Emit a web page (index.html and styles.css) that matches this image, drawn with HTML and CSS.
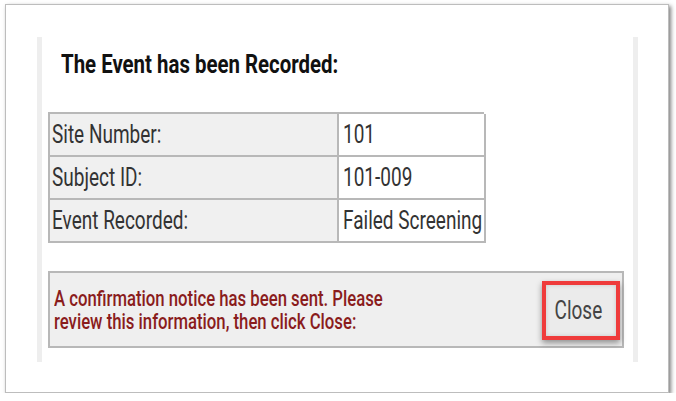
FILE: index.html
```html
<!DOCTYPE html>
<html lang="en">
<head>
<meta charset="utf-8">
<title>Event Recorded</title>
<link rel="stylesheet" href="styles.css">
</head>
<body>
<div class="frame">
  <div class="panel">
    <h1 class="title"><span class="sq wide">The Event has been Recorded:</span></h1>
    <div class="grid">
      <div class="cell label"><span class="sq">Site Number:</span></div>
      <div class="cell value"><span class="sq">101</span></div>
      <div class="cell label"><span class="sq">Subject ID:</span></div>
      <div class="cell value"><span class="sq">101-009</span></div>
      <div class="cell label"><span class="sq">Event Recorded:</span></div>
      <div class="cell value"><span class="sq">Failed Screening</span></div>
    </div>
    <div class="notice">
      <p class="notice-text"><span class="sq">A confirmation notice has been sent. Please<br>review this information, then click Close:</span></p>
      <div class="highlight">
        <button class="close-btn" type="button"><span class="sq center">Close</span></button>
      </div>
    </div>
  </div>
</div>
</body>
</html>
```

FILE: styles.css
```css
* { box-sizing: border-box; }

body {
  margin: 0;
  background: #ffffff;
  font-family: Roboto, "Liberation Sans", Arial, sans-serif;
  color: #333333;
}

.frame {
  margin: 4px 0 0 5px;
  width: 664px;
  height: 389px;
  border: 1px solid #bdbdbd;
  box-shadow: 2px 2px 4px rgba(0, 0, 0, 0.5);
  background: #ffffff;
  padding: 32px 0 0 31px;
}

.panel {
  width: 601px;
  height: 325px;
  border-left: 5px solid #eeeeee;
  border-right: 5px solid #eeeeee;
  padding: 12px 9px 0 6px;
}

.sq {
  display: inline-block;
  white-space: nowrap;
  transform: scaleX(0.76);
  transform-origin: left center;
}

.sq.wide { transform: scaleX(0.785); }

.sq.center { transform-origin: center center; }

.title {
  margin: 0 0 33px 0;
  padding-left: 13px;
  font-size: 26px;
  line-height: 30px;
  font-weight: 700;
  color: #111111;
}

.grid {
  display: grid;
  grid-template-columns: 289px 147px;
  grid-auto-rows: 43px;
  width: 436px;
  border-top: 2px solid #b8b8b8;
  border-left: 2px solid #b8b8b8;
}

.cell {
  display: flex;
  align-items: center;
  padding-left: 2px;
  border-right: 2px solid #b8b8b8;
  border-bottom: 2px solid #b8b8b8;
  font-size: 25px;
  font-weight: 400;
  color: #333333;
  overflow: hidden;
}

.cell.label { background: #f0f0f0; }
.cell.value { background: #ffffff; padding-left: 4px; }

.notice {
  margin-top: 28px;
  height: 77px;
  display: flex;
  align-items: center;
  justify-content: space-between;
  background: #efefef;
  border: 2px solid #b8b8b8;
  padding: 0 2px 0 4px;
}

.notice-text {
  margin: 0;
  font-size: 22px;
  line-height: 23px;
  font-weight: 500;
  color: #8a1c1c;
}

.highlight {
  width: 78px;
  height: 59px;
  border: 4px solid #ef3b3b;
  box-shadow: 0 3px 6px rgba(0, 0, 0, 0.4);
  margin-top: 2px;
}

.close-btn {
  width: 100%;
  height: 100%;
  margin: 0;
  padding: 0 6px 0 0;
  border: none;
  background: #ebebeb;
  box-shadow: inset 0 0 4px rgba(0, 0, 0, 0.15);
  font-family: Roboto, "Liberation Sans", Arial, sans-serif;
  font-size: 25px;
  color: #444444;
  cursor: pointer;
}
```
